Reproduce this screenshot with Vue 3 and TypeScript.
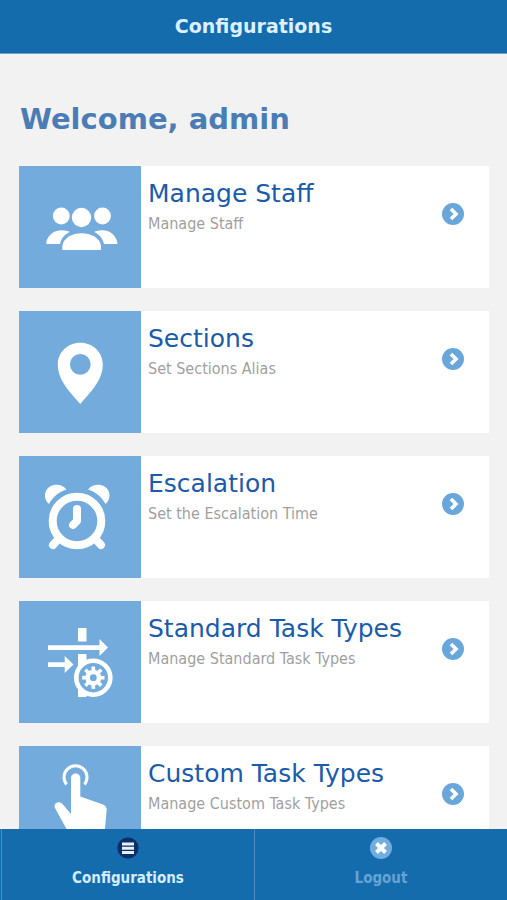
<script setup lang="ts">
type IconName = 'staff' | 'pin' | 'clock' | 'flow' | 'touch'

interface MenuItem {
  title: string
  note: string
  icon: IconName
}

const items: MenuItem[] = [
  { title: 'Manage Staff', note: 'Manage Staff', icon: 'staff' },
  { title: 'Sections', note: 'Set Sections Alias', icon: 'pin' },
  { title: 'Escalation', note: 'Set the Escalation Time', icon: 'clock' },
  { title: 'Standard Task Types', note: 'Manage Standard Task Types', icon: 'flow' },
  { title: 'Custom Task Types', note: 'Manage Custom Task Types', icon: 'touch' },
]

const teeth: number[] = [0, 45, 90, 135, 180, 225, 270, 315]
</script>

<template>
  <div class="screen">
    <header class="bar">
      <h1>Configurations</h1>
    </header>

    <main class="content">
      <h2>Welcome, admin</h2>
      <ul class="list">
        <li v-for="item in items" :key="item.title">
          <a class="card" href="#">
            <span class="tile">
              <svg viewBox="0 0 122 122" aria-hidden="true">
                <g v-if="item.icon === 'staff'" fill="#fff">
                  <circle cx="62.5" cy="51.5" r="9.7" />
                  <circle cx="42.3" cy="50" r="8.4" />
                  <circle cx="83.5" cy="50" r="8.4" />
                  <path d="M43.3 84V80C44.5 72 53 67.3 62.5 67.3S81 72 82 80V84Z" />
                  <path d="M27.3 78V76C29 69 35 64.3 43 64.3C46 64.3 49 65 51 66C46 68 42.5 72 41 78Z" />
                  <path d="M98.3 78V76C96.5 69 91 64.3 83 64.3C80 64.3 77 65 75 66C80 68 83.5 72 85 78Z" />
                </g>
                <path
                  v-else-if="item.icon === 'pin'"
                  fill="#fff"
                  fill-rule="evenodd"
                  d="M61.3 31.8C48.5 31.8 38.8 41.5 38.8 53.5C38.8 70 52 82 61.3 93C70.5 82 83.8 70 83.8 53.5C83.8 41.5 74 31.8 61.3 31.8ZM61.3 43A10.4 10.4 0 1 1 61.3 63.8A10.4 10.4 0 1 1 61.3 43Z"
                />
                <g v-else-if="item.icon === 'clock'" fill="none" stroke="#fff" stroke-width="8" stroke-linecap="round" stroke-linejoin="round">
                  <circle cx="58" cy="65" r="24.3" />
                  <path d="M58 53V65L54 69" />
                  <path d="M39.5 83L34 89M76.5 83L82 89" />
                  <path fill="#fff" stroke="none" d="M30 48C24 43 25 34 31 30.5C36 27.5 44 28.5 47.5 33.5C40 36 33.5 41 30 48Z" />
                  <path fill="#fff" stroke="none" d="M86.5 48C92.5 43 91.5 34 85.5 30.5C80.5 27.5 72.5 28.5 69 33.5C76.5 36 83 41 86.5 48Z" />
                </g>
                <g v-else-if="item.icon === 'flow'" fill="#fff">
                  <path d="M59 27H67.5V40.5H59ZM59 53H67.5V96H59Z" />
                  <path d="M29 44.3H80.5V38L89 46.5L80.5 55V49H29Z" />
                  <path d="M29 61.3H45.7V55L54.5 63.5L45.7 72V66H29Z" />
                  <circle class="well" cx="74.3" cy="76.7" r="17" stroke="#fff" stroke-width="4.6" />
                  <circle cx="74.3" cy="76.7" r="8" />
                  <rect
                    v-for="angle in teeth"
                    :key="angle"
                    x="72.5"
                    y="65.5"
                    width="3.6"
                    height="5"
                    :transform="`rotate(${angle} 74.3 76.7)`"
                  />
                  <circle class="well" cx="74.3" cy="76.7" r="3.4" />
                </g>
                <g v-else fill="#fff">
                  <path fill="none" stroke="#fff" stroke-width="3" d="M47.5 38.5A11.5 11.5 0 1 1 65.5 38.5" />
                  <path d="M52 68V32C52 26 61.3 26 61.3 32V50.5L84 58.5Q87.7 60 87.7 63.5L86 82L82 98H55L47 82L36 62C34 57 40 54 43.5 58Z" />
                </g>
              </svg>
            </span>
            <span class="text">
              <span class="title">{{ item.title }}</span>
              <span class="note">{{ item.note }}</span>
            </span>
            <svg class="go" viewBox="0 0 22 22" aria-hidden="true">
              <circle cx="11" cy="11" r="11" fill="#69a7db" />
              <path d="M9 6L14 11L9 16" fill="none" stroke="#fff" stroke-width="3.6" />
            </svg>
          </a>
        </li>
      </ul>
    </main>

    <nav class="tabs">
      <a class="tab active" href="#">
        <svg viewBox="0 0 22 22" aria-hidden="true">
          <circle cx="11" cy="11" r="10.6" fill="#0b2f68" />
          <path d="M5 7H17M5 11.2H17M5 15.4H17" stroke="#e4f0fa" stroke-width="3" />
        </svg>
        <span>Configurations</span>
      </a>
      <a class="tab" href="#">
        <svg viewBox="0 0 22 22" aria-hidden="true">
          <circle cx="11" cy="11" r="11" fill="#72addf" />
          <path d="M6.5 6.5L15.5 15.5M15.5 6.5L6.5 15.5" stroke="#fff" stroke-width="4" />
        </svg>
        <span>Logout</span>
      </a>
    </nav>
  </div>
</template>

<style>
body {
  margin: 0;
  background: #f2f2f2;
}
</style>

<style scoped>
.screen {
  display: flex;
  flex-direction: column;
  height: 100vh;
  background: #f2f2f2;
  font-family: "DejaVu Sans", Verdana, sans-serif;
}

.bar {
  flex: none;
  padding: 14px 0 15px;
  background: #146cad;
  border-bottom: 1px solid #6fa3cb;
  text-align: center;
}

h1 {
  margin: 0;
  color: #dcf0ff;
  font-size: 19px;
  line-height: 24px;
}

.content {
  flex: 1;
  min-height: 0;
  padding: 0 18px 0 19px;
  overflow-y: auto;
  scrollbar-width: none;
}

h2 {
  margin: 45px 0 27px;
  padding-left: 1px;
  color: #4a7db5;
  font-size: 29px;
  line-height: 40px;
}

.list {
  display: grid;
  gap: 23px;
  margin: 0;
  padding: 0 0 24px;
  list-style: none;
}

.card {
  display: flex;
  background: #fff;
  text-decoration: none;
}

.tile {
  flex: none;
  width: 122px;
  background: #72abdc;
}

.tile svg {
  display: block;
}

.well {
  fill: #72abdc;
}

.text {
  display: flex;
  flex: 1;
  flex-direction: column;
  padding: 12px 0 0 7px;
}

.title {
  color: #1b5ba9;
  font-size: 25px;
  line-height: 32px;
}

.note {
  color: #9f9f9f;
  font-family: "DejaVu Sans Condensed", "DejaVu Sans", Tahoma, sans-serif;
  font-size: 16px;
  line-height: 28px;
}

.go {
  flex: none;
  width: 22px;
  height: 22px;
  margin: 37px 25px 0 0;
}

.tabs {
  display: flex;
  flex: none;
  background: #146cad;
  border-left: 1px solid #146cad;
}

.tab {
  display: flex;
  flex: 1;
  flex-direction: column;
  align-items: center;
  gap: 8px;
  padding: 8px 0 11px;
  border-left: 1px solid #4a8fc4;
  color: #66a3d3;
  font-family: "DejaVu Sans Condensed", "DejaVu Sans", Tahoma, sans-serif;
  font-size: 15px;
  font-weight: bold;
  line-height: 22px;
  text-decoration: none;
}

.tab svg {
  width: 22px;
  height: 22px;
}

.active {
  color: #d5ecfc;
}
</style>
